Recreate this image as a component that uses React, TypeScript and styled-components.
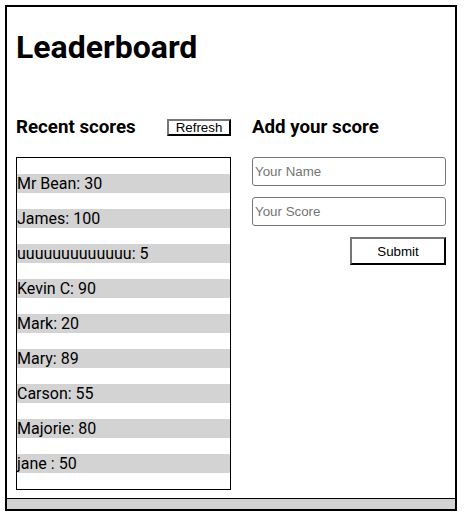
import React from "react";
import styled, { createGlobalStyle } from "styled-components";

const Global = createGlobalStyle`
  html, body { margin: 0; padding: 0; background: #fff; }
  body { font-family: Roboto, "Liberation Sans", Arial, sans-serif; color: #000; }
`;

const Frame = styled.div`
  box-sizing: border-box;
  margin: 5px;
  width: 452px;
  height: 506px;
  border: 2px solid #000;
  display: flex;
  flex-direction: column;
`;

const Content = styled.main`
  flex: 1;
  padding: 0 9px;
`;

const Title = styled.h1`
  margin: 22px 0 0;
  font-family: Roboto, sans-serif;
  font-weight: 700;
  font-size: 32px;
  line-height: 37.5px;
`;

const Columns = styled.div`
  display: flex;
  margin-top: 49px;
`;

const LeftColumn = styled.section`
  width: 215px;
  display: flex;
  flex-direction: column;
`;

const RightColumn = styled.section`
  flex: 1;
  padding-left: 21px;
  display: flex;
  flex-direction: column;
`;

const SectionHeader = styled.div`
  display: flex;
  align-items: center;
  justify-content: space-between;
  height: 23.5px;
`;

const SectionTitle = styled.h2`
  margin: 0;
  font-family: Roboto, sans-serif;
  font-weight: 700;
  font-size: 18.72px;
  line-height: 23.5px;
`;

const SmallButton = styled.button`
  box-sizing: border-box;
  height: 17px;
  width: 64px;
  padding: 0;
  background: #fff;
  border: 2px solid;
  border-color: #767676 #000 #000 #767676;
  font-family: "Liberation Sans", Arial, sans-serif;
  font-size: 13.33px;
  line-height: 13px;
  color: #000;
`;

const ScoreList = styled.div`
  margin-top: 17.5px;
  box-sizing: border-box;
  height: 333px;
  border: 1px solid #000;
  display: flex;
  flex-direction: column;
  gap: 16px;
  padding: 16px 0;
`;

const ScoreRow = styled.p`
  margin: 0;
  background: #d3d3d3;
  font-family: Roboto, sans-serif;
  font-size: 16px;
  line-height: 19px;
  white-space: nowrap;
  overflow: hidden;
`;

const Form = styled.form`
  margin-top: 18px;
  display: flex;
  flex-direction: column;
  gap: 11px;
`;

const Input = styled.input`
  box-sizing: border-box;
  width: 194px;
  height: 29px;
  border: 1px solid #767676;
  border-radius: 3px;
  padding: 0 2px;
  font-family: "Liberation Sans", Arial, sans-serif;
  font-size: 13.33px;
  &::placeholder { color: #757575; }
`;

const SubmitButton = styled.button`
  box-sizing: border-box;
  align-self: flex-start;
  margin-left: 98px;
  width: 96px;
  height: 28px;
  background: #fff;
  border: 2px solid;
  border-color: #767676 #000 #000 #767676;
  font-family: "Liberation Sans", Arial, sans-serif;
  font-size: 13.33px;
  color: #000;
`;

const Footer = styled.footer`
  height: 10px;
  border-top: 1px solid #000;
  background: #d3d3d3;
`;

const scores = [
  "Mr Bean: 30",
  "James: 100",
  "uuuuuuuuuuuuu: 5",
  "Kevin C: 90",
  "Mark: 20",
  "Mary: 89",
  "Carson: 55",
  "Majorie: 80",
  "jane : 50",
];

export default function App() {
  return (
    <>
      <Global />
      <Frame>
        <Content>
          <Title>Leaderboard</Title>
          <Columns>
            <LeftColumn>
              <SectionHeader>
                <SectionTitle>Recent scores</SectionTitle>
                <SmallButton type="button">Refresh</SmallButton>
              </SectionHeader>
              <ScoreList>
                {scores.map((s, i) => (
                  <ScoreRow key={i}>{s}</ScoreRow>
                ))}
              </ScoreList>
            </LeftColumn>
            <RightColumn>
              <SectionHeader>
                <SectionTitle>Add your score</SectionTitle>
              </SectionHeader>
              <Form onSubmit={(e) => e.preventDefault()}>
                <Input placeholder="Your Name" />
                <Input placeholder="Your Score" />
                <SubmitButton type="submit">Submit</SubmitButton>
              </Form>
            </RightColumn>
          </Columns>
        </Content>
        <Footer />
      </Frame>
    </>
  );
}
